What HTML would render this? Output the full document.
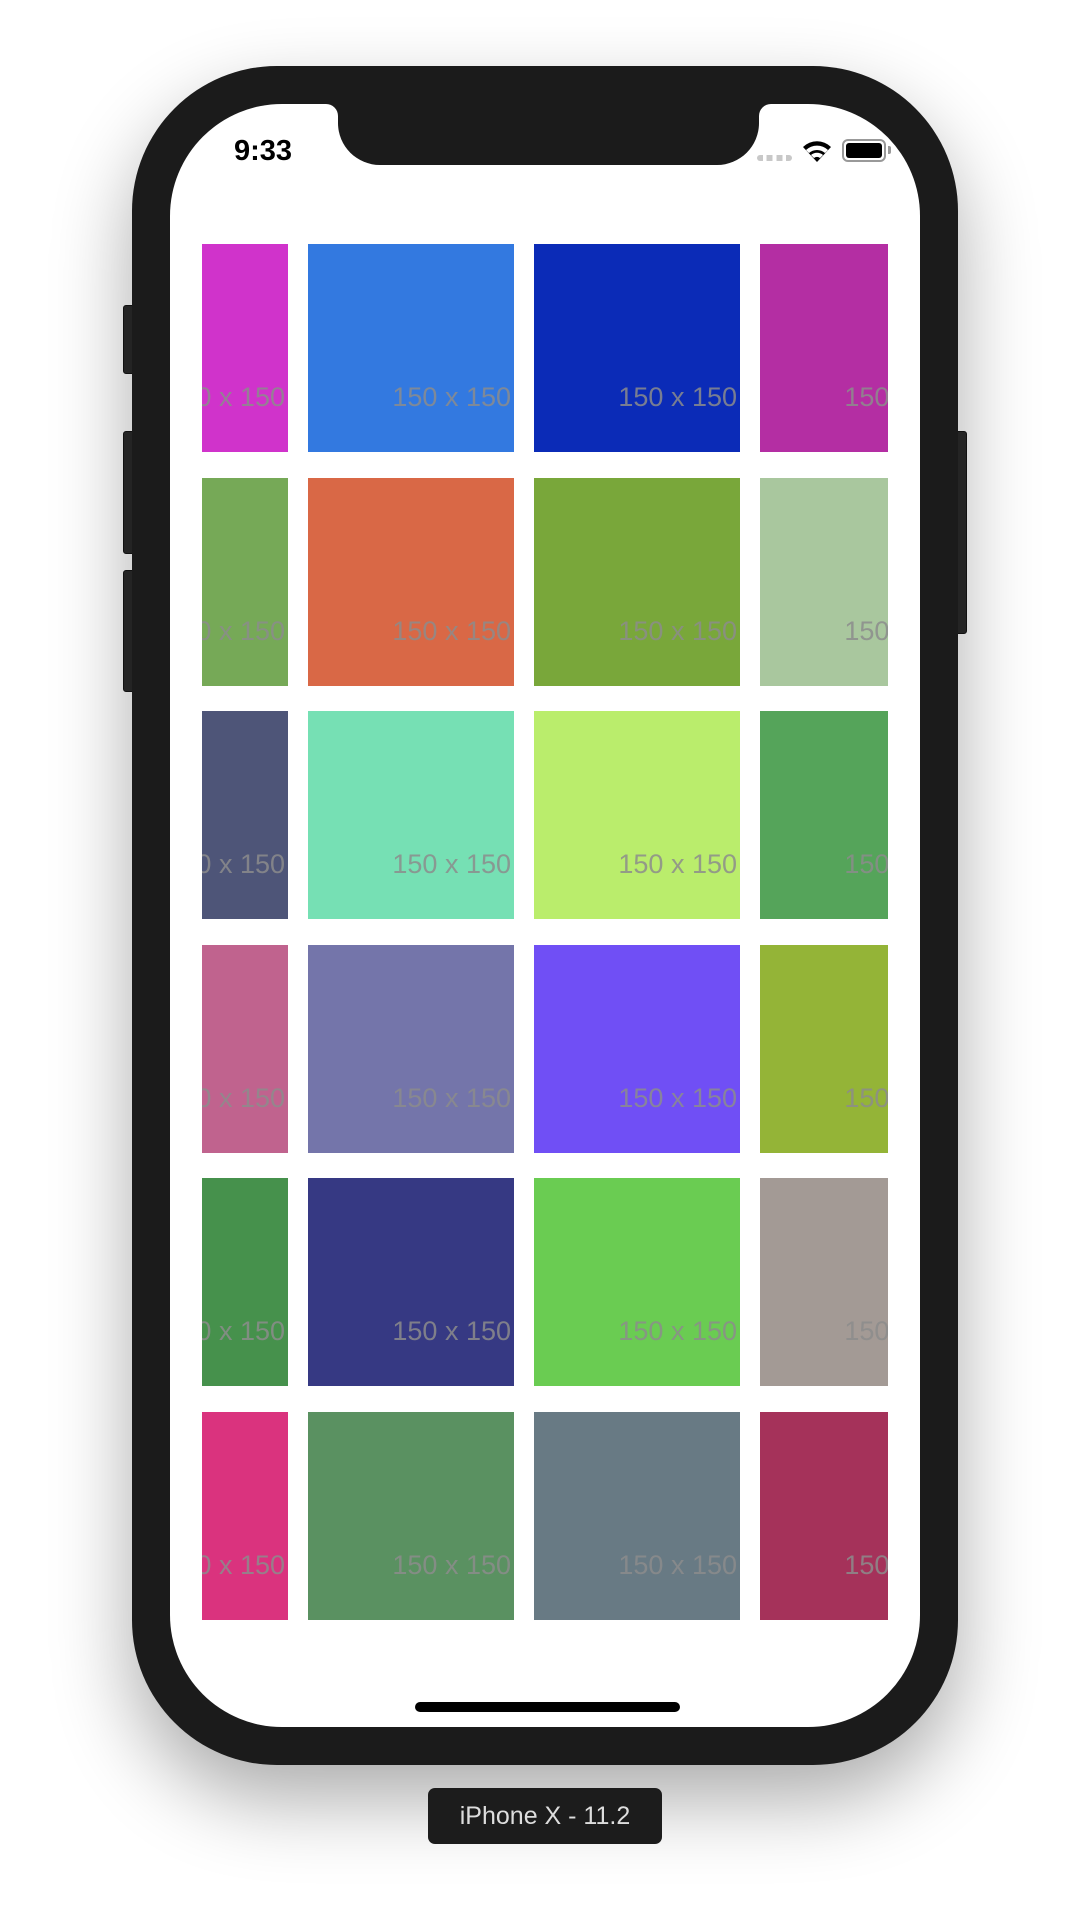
<!DOCTYPE html><html><head><style>
body{margin:0;width:1090px;height:1928px;background:#fff;position:relative;overflow:hidden;font-family:"Liberation Sans",sans-serif}
.phone{position:absolute;left:132px;top:66px;width:826px;height:1699px;background:#1b1b1b;border-radius:145px;box-shadow:0 35px 80px rgba(0,0,0,.33)}
.btn{position:absolute;background:#2c2c2c;border-radius:3px;border:1px solid #151515;box-sizing:border-box}
.screen{position:absolute;left:170px;top:104px;width:750px;height:1623px;background:#fff;border-radius:112px;overflow:hidden}
.notch{position:absolute;left:168px;top:-2px;width:421px;height:63px;background:#1b1b1b;border-radius:0 0 42px 42px}
.flare{position:absolute;top:0;width:12px;height:12px;background:#1b1b1b}
.flare i{position:absolute;inset:0;background:#fff}
.tile{position:absolute;overflow:hidden;height:208px}
.tile span{position:absolute;top:0;width:206px;height:208px;text-align:right;font-size:27px;line-height:1;color:rgba(140,140,140,.85)}
.tile span b{position:absolute;right:3px;top:140px;font-weight:normal}
</style></head><body>
<div class="btn" style="left:123px;top:305px;width:12px;height:69px"></div>
<div class="btn" style="left:123px;top:431px;width:12px;height:123px"></div>
<div class="btn" style="left:123px;top:570px;width:12px;height:122px"></div>
<div class="btn" style="left:955px;top:431px;width:12px;height:203px"></div>
<div class="phone"></div>
<div class="screen">
<div class="notch"></div>
<div class="flare" style="left:156px"><i style="border-top-right-radius:12px"></i></div>
<div class="flare" style="left:589px"><i style="border-top-left-radius:12px"></i></div>
<div style="position:absolute;left:64px;top:31px;font-size:29px;font-weight:bold;color:#000">9:33</div>
<div style="position:absolute;left:587px;top:51px;width:35px;height:6px;background:repeating-linear-gradient(90deg,#c8c8c8 0 6px,transparent 6px 9.7px);border-radius:3px"></div>
<svg style="position:absolute;left:632px;top:34px" width="30" height="24" viewBox="0 0 30 24"><path d="M15 24L1 9A20 20 0 0 1 29 9Z" fill="#000"/><path d="M4 12A16 16 0 0 1 26 12L23 15A12 12 0 0 0 7 15Z" fill="#fff"/><path d="M9 17A9 9 0 0 1 21 17L18 20A5 5 0 0 0 12 20Z" fill="#fff"/></svg>
<div style="position:absolute;left:672px;top:35px;width:40px;height:19px;border:2px solid #999;border-radius:6px"></div>
<div style="position:absolute;left:676px;top:39px;width:36px;height:15px;background:#000;border-radius:3px"></div>
<div style="position:absolute;left:718px;top:42px;width:3px;height:8px;background:#999;border-radius:0 2px 2px 0"></div>
<div style="position:absolute;left:245px;top:1598px;width:265px;height:10px;background:#000;border-radius:5px"></div>
</div>
<div id="grid"></div>
<div style="position:absolute;left:428px;top:1788px;width:234px;height:56px;background:#1c1c1c;border-radius:7px;color:#ddd;font-size:25px;line-height:56px;text-align:center">iPhone X - 11.2</div>
<script>
var cols=[[202,86,-120],[308,206,0],[534,206,0],[760,128,0]];
var colors=[["#d033cb","#3379e0","#0b2bb7","#b42ea3"],["#76a957","#d96846","#79a73a","#a9c79e"],["#4e5578","#76e0b4","#baed6c","#55a45a"],["#c0638e","#7475aa","#704ff5","#94b437"],["#46914c","#363983","#6acc52","#a39a95"],["#da337e","#5a9161","#687a84","#a5325a"]];
var h="";
for(var r=0;r<6;r++){var t=244+Math.round(r*233.6);for(var c=0;c<4;c++){var k=cols[c];h+='<div class="tile" style="left:'+k[0]+'px;top:'+t+'px;width:'+k[1]+'px;background:'+colors[r][c]+'"><span style="left:'+k[2]+'px"><b>150 x 150</b></span></div>';}}
document.getElementById('grid').innerHTML=h;
</script>
</body></html>
